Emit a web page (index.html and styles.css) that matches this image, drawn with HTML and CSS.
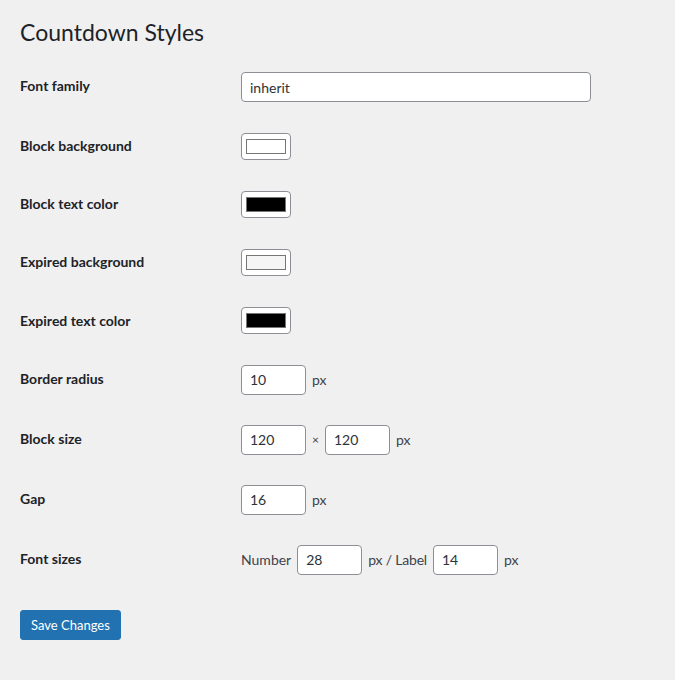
FILE: index.html
```html
<!DOCTYPE html>
<html>
<head>
<meta charset="utf-8">
<link rel="stylesheet" href="styles.css">
</head>
<body>
<div class="wrap">
  <h1 class="title">Countdown Styles</h1>
  <form>
    <table class="form-table">
      <tr class="row-text">
        <th>Font family</th>
        <td><input class="text regular" type="text" value="inherit"></td>
      </tr>
      <tr class="row-color">
        <th>Block background</th>
        <td><input class="color" type="color" value="#ffffff"></td>
      </tr>
      <tr class="row-color">
        <th>Block text color</th>
        <td><input class="color" type="color" value="#000000"></td>
      </tr>
      <tr class="row-color">
        <th>Expired background</th>
        <td><input class="color" type="color" value="#f5f5f5"></td>
      </tr>
      <tr class="row-color">
        <th>Expired text color</th>
        <td><input class="color" type="color" value="#000000"></td>
      </tr>
      <tr class="row-text">
        <th>Border radius</th>
        <td><div class="inline"><input class="text small" type="number" value="10"><span>px</span></div></td>
      </tr>
      <tr class="row-text">
        <th>Block size</th>
        <td><div class="inline"><input class="text small" type="number" value="120"><span class="times">×</span><input class="text small" type="number" value="120"><span>px</span></div></td>
      </tr>
      <tr class="row-text">
        <th>Gap</th>
        <td><div class="inline"><input class="text small" type="number" value="16"><span>px</span></div></td>
      </tr>
      <tr class="row-text">
        <th>Font sizes</th>
        <td><div class="inline"><span>Number</span><input class="text small" type="number" value="28"><span class="sep">px / Label</span><input class="text small" type="number" value="14"><span>px</span></div></td>
      </tr>
    </table>
    <p class="submit"><button type="button" class="button-primary">Save Changes</button></p>
  </form>
</div>
</body>
</html>
```
FILE: styles.css
```css
html, body {
  margin: 0;
  padding: 0;
  background: #f0f0f1;
}
body {
  font-family: Lato, "Open Sans", sans-serif;
  font-size: 14px;
  color: #3c434a;
  width: 675px;
  height: 680px;
  overflow: hidden;
}
.wrap {
  padding: 0 20px;
}
.title {
  margin: 0;
  padding: 17px 0 10px;
  font-size: 23px;
  line-height: 30px;
  font-weight: 400;
  color: #1d2327;
}
.form-table {
  border-collapse: collapse;
  border-spacing: 0;
}
.form-table th {
  width: 200px;
  padding: 20px 10px 20px 0;
  text-align: left;
  vertical-align: top;
  font-weight: 700;
  line-height: 1.3;
  color: #1d2327;
}
.form-table td {
  padding: 15px 10px 15px 11px;
  vertical-align: middle;
  line-height: 1.3;
}
.text {
  box-sizing: border-box;
  height: 30px;
  margin: 0;
  padding: 0 8px;
  border: 1px solid #8c8f94;
  border-radius: 4px;
  background: #fff;
  font-family: Lato, "Open Sans", sans-serif;
  font-size: 14px;
  color: #2c3338;
  display: block;
}
.text.regular {
  width: 350px;
}
.text.small {
  width: 65px;
  -moz-appearance: textfield;
}
.text.small::-webkit-outer-spin-button,
.text.small::-webkit-inner-spin-button {
  -webkit-appearance: none;
  margin: 0;
}
.color {
  display: block;
  box-sizing: border-box;
  width: 50px;
  height: 27px;
  margin: 0;
  padding: 0;
  border: 1px solid #8c8f94;
  border-radius: 4px;
  background: #fff;
  -webkit-appearance: none;
  appearance: none;
  cursor: pointer;
}
.color::-webkit-color-swatch-wrapper {
  padding: 5px 4px;
}
.color::-webkit-color-swatch {
  border: 1px solid #767676;
  border-radius: 0;
}
.inline {
  display: flex;
  align-items: center;
  gap: 6px;
}
.times {
  font-size: 12px;
  width: 7px;
  text-align: center;
}
.sep {
  letter-spacing: -0.2px;
}
.submit {
  margin: 20px 0 0;
  padding: 0;
}
.button-primary {
  height: 30px;
  padding: 0 10px;
  border: 1px solid #2271b1;
  border-radius: 3px;
  background: #2271b1;
  color: #fff;
  font-family: Lato, "Open Sans", sans-serif;
  font-size: 13px;
  line-height: 28px;
  cursor: pointer;
}
```
